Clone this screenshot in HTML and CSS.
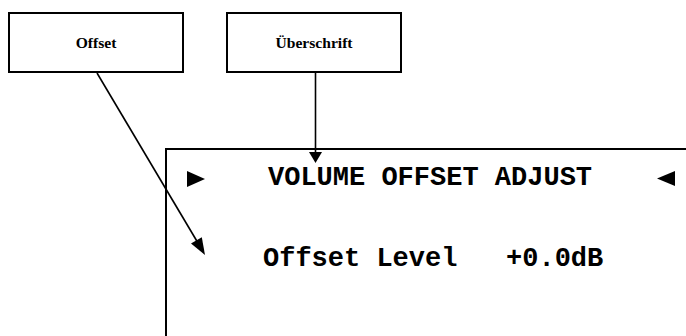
FILE: index.html
```html
<!DOCTYPE html>
<html lang="de">
<head>
<meta charset="utf-8">
<title>Volume Offset Adjust</title>
<link rel="stylesheet" href="styles.css">
</head>
<body>
<div class="canvas">
  <div class="callout callout-offset">Offset</div>
  <div class="callout callout-heading">Überschrift</div>

  <div class="display">
    <div class="display-title">
      <svg class="tri tri-right" width="18" height="16" viewBox="0 0 18 16"><polygon points="0,0 18,8 0,16" fill="#000"/></svg>
      <span class="title-text">VOLUME OFFSET ADJUST</span>
      <svg class="tri tri-left" width="18" height="15" viewBox="0 0 18 15"><polygon points="18,0 0,7.5 18,15" fill="#000"/></svg>
    </div>
    <div class="display-row">Offset Level   +0.0dB</div>
  </div>

  <svg class="pointers" width="686" height="336" viewBox="0 0 686 336">
    <line x1="315.5" y1="73" x2="315.5" y2="153" stroke="#000" stroke-width="1.6"/>
    <polygon points="309,152 322,152 315.5,163" fill="#000"/>
    <line x1="97" y1="73" x2="198" y2="243" stroke="#000" stroke-width="1.6"/>
    <polygon points="191,243.6 201.8,237.2 205,255" fill="#000"/>
  </svg>
</div>
</body>
</html>
```

FILE: styles.css
```css
html, body {
  margin: 0;
  padding: 0;
  background: #fff;
}

.canvas {
  position: relative;
  width: 686px;
  height: 336px;
  overflow: hidden;
  background: #fff;
}

.callout {
  position: absolute;
  top: 12px;
  width: 176px;
  height: 61px;
  box-sizing: border-box;
  border: 2px solid #000;
  display: flex;
  align-items: center;
  justify-content: center;
  font-family: "Liberation Serif", "Times New Roman", serif;
  font-weight: bold;
  font-size: 15.6px;
  color: #000;
  padding-top: 1px;
}

.callout-offset {
  left: 8px;
}

.callout-heading {
  left: 226px;
}

.display {
  position: absolute;
  left: 165px;
  top: 148px;
  width: 560px;
  height: 240px;
  box-sizing: border-box;
  border-top: 2px solid #000;
  border-left: 2px solid #000;
  font-family: "Courier New", "Nimbus Mono PS", "Nimbus Mono L", "FreeMono", "Courier", "Liberation Mono", monospace;
  font-weight: bold;
  font-size: 27px;
  line-height: 27px;
  color: #000;
}

.display-title {
  display: flex;
  align-items: center;
  margin-top: 15px;
  height: 27px;
}

.tri-right {
  margin-left: 20px;
  flex: none;
}

.title-text {
  margin-left: 63px;
  white-space: pre;
}

.tri-left {
  margin-left: 65px;
  flex: none;
}

.display-row {
  margin-top: 54px;
  margin-left: 96px;
  white-space: pre;
}

.pointers {
  position: absolute;
  left: 0;
  top: 0;
}
```
